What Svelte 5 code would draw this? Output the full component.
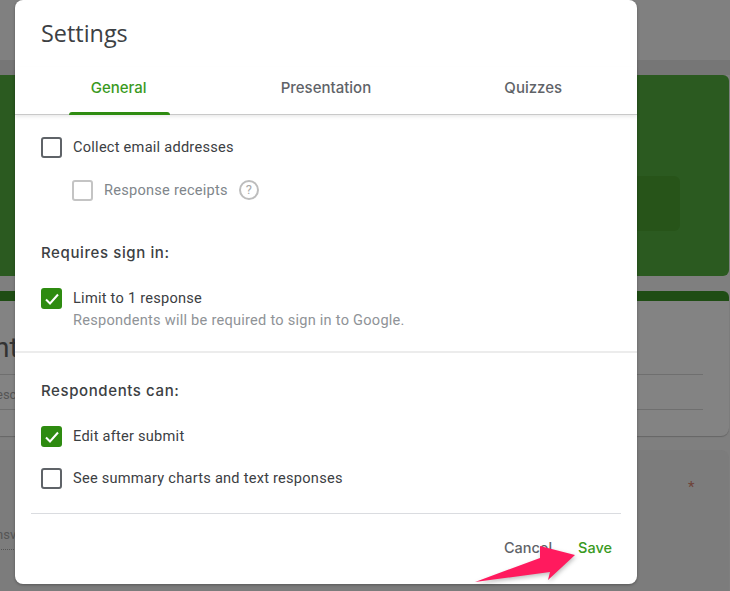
<script>
	const tabs = ['General', 'Presentation', 'Quizzes'];
</script>

<div class="page">
	<div class="backdrop">
		<div class="topbar"></div>
		<div class="banner">
			<div class="patch"></div>
		</div>
		<div class="title-card">
			<div class="strip"></div>
			<div class="title-body">
				<span class="big">nt</span>
				<div class="rule"></div>
				<span class="small">esc</span>
				<div class="rule"></div>
			</div>
		</div>
		<div class="question-card">
			<span class="star">*</span>
			<span class="small answer">nsv</span>
		</div>
	</div>

	<div class="dialog">
		<h1>Settings</h1>
		<div class="tabs">
			{#each tabs as tab, i}
				<div class="tab" class:active={i === 0}>{tab}</div>
			{/each}
		</div>

		<div class="section first">
			<div class="row">
				<span class="box"></span>
				<span class="label">Collect email addresses</span>
			</div>
			<div class="row nested">
				<span class="box disabled"></span>
				<span class="label muted">Response receipts</span>
				<span class="help">?</span>
			</div>
			<h2>Requires sign in:</h2>
			<div class="row top">
				<span class="box checked">
					<svg viewBox="0 0 22 22" width="22" height="22"><path d="M5 11.5l4 4 8-9" fill="none" stroke="#fff" stroke-width="2" /></svg>
				</span>
				<div>
					<div class="label">Limit to 1 response</div>
					<div class="hint">Respondents will be required to sign in to Google.</div>
				</div>
			</div>
		</div>

		<div class="section second">
			<h2>Respondents can:</h2>
			<div class="row">
				<span class="box checked">
					<svg viewBox="0 0 22 22" width="22" height="22"><path d="M5 11.5l4 4 8-9" fill="none" stroke="#fff" stroke-width="2" /></svg>
				</span>
				<span class="label">Edit after submit</span>
			</div>
			<div class="row">
				<span class="box"></span>
				<span class="label">See summary charts and text responses</span>
			</div>
		</div>

		<div class="footer">
			<span class="cancel">Cancel</span>
			<span class="save">Save</span>
		</div>
	</div>

	<svg class="arrow" viewBox="0 0 730 591" width="730" height="591">
		<polygon points="475,582 540,558 540,546 575,555 548,580 550,572" fill="#ff1a5e" />
	</svg>
</div>

<style>
	:global(body) {
		margin: 0;
		background: #7f7f7f;
	}

	.page {
		position: relative;
		width: 730px;
		height: 591px;
		overflow: hidden;
		font-family: Roboto, sans-serif;
	}

	.backdrop {
		display: flex;
		flex-direction: column;
		height: 100%;
		background: #7f7f7f;
	}

	.topbar {
		height: 60px;
		padding-bottom: 15px;
		background-image: linear-gradient(#808080 60px, #767676 60px);
	}

	.banner {
		position: relative;
		height: 201px;
		margin-right: 1px;
		background: #2b5a20;
		border-radius: 0 6px 6px 0;
	}

	.patch {
		position: absolute;
		left: 620px;
		top: 101px;
		width: 60px;
		height: 55px;
		background: #275419;
		border-radius: 6px;
	}

	.title-card {
		margin-top: 15px;
		margin-right: 1px;
		height: 145px;
		background: #838383;
		border-radius: 0 6px 8px 0;
		overflow: hidden;
		box-shadow: 0 1px 1px #666;
	}

	.strip {
		height: 10px;
		background: #1f4d14;
	}

	.title-body {
		display: flex;
		flex-direction: column;
		padding-top: 31px;
	}

	.big {
		font-size: 28px;
		line-height: 32px;
		color: #333;
		margin-left: -6px;
		margin-bottom: 10px;
	}

	.small {
		font-size: 13px;
		color: #555;
		line-height: 16px;
	}

	.title-body .rule {
		height: 1px;
		background: #6f6f6f;
		margin: 0 26px 0 0;
	}

	.title-body .small {
		margin-top: 12px;
		margin-bottom: 6px;
		margin-left: -4px;
	}

	.question-card {
		position: relative;
		margin-top: 14px;
		flex: 1;
		margin-right: 1px;
		background: #7c7c7c;
		border-radius: 0 8px 0 0;
	}

	.star {
		position: absolute;
		left: 688px;
		top: 28px;
		font-size: 15px;
		color: #6e4238;
	}

	.answer {
		position: absolute;
		left: 0;
		width: 24px;
		margin-left: -4px;
		top: 77px;
		padding-bottom: 6px;
		border-bottom: 1px dotted #555;
	}

	.dialog {
		position: absolute;
		left: 15px;
		top: 0;
		width: 622px;
		height: 584px;
		background: #fff;
		border-radius: 8px;
		box-shadow: 0 1px 3px rgba(0, 0, 0, 0.3);
		display: flex;
		flex-direction: column;
	}

	h1 {
		margin: 0;
		padding: 19px 26px 0;
		font-size: 23.4px;
		line-height: 28px;
		font-weight: 400;
		color: #3c4043;
		font-family: 'Open Sans', Roboto, sans-serif;
	}

	.tabs {
		display: flex;
		margin-top: 20px;
		height: 47px;
		border-bottom: 1px solid #c9c9c9;
		box-shadow: 0 2px 3px rgba(0, 0, 0, 0.08);
	}

	.tab {
		width: 207.3px;
		text-align: center;
		font-size: 15px;
		font-weight: 500;
		line-height: 42px;
		color: #5f6368;
		font-family: Inter, Roboto, sans-serif;
		position: relative;
	}

	.tab.active {
		color: #3a9a1e;
	}

	.tab.active::after {
		content: '';
		position: absolute;
		left: 54px;
		right: 52px;
		bottom: -1px;
		height: 3px;
		background: #2e8b10;
		border-radius: 3px 3px 0 0;
	}

	.section {
		padding: 0 26px;
		display: flex;
		flex-direction: column;
	}

	.first {
		padding-top: 21px;
		height: 238px;
		box-sizing: border-box;
		border-bottom: 2px solid #ececec;
	}

	.second {
		padding-top: 28px;
	}

	.row {
		display: flex;
		align-items: center;
		gap: 11px;
		min-height: 22px;
	}

	.row.top {
		align-items: flex-start;
	}

	.nested {
		margin: 21px 0 0 31px;
	}

	.box {
		flex: none;
		box-sizing: border-box;
		width: 21px;
		height: 21px;
		border: 2px solid #5f6368;
		border-radius: 3px;
	}

	.box.disabled {
		border-color: #c4c4c4;
	}

	.box.checked {
		border: none;
		background: #2e8b10;
	}

	.box svg {
		display: block;
	}

	.label {
		font-size: 14.6px;
		line-height: 20px;
		letter-spacing: 0.24px;
		color: #3c4043;
	}

	.muted {
		color: #80868b;
	}

	.hint {
		font-size: 14.6px;
		line-height: 20px;
		letter-spacing: 0.24px;
		color: #8f9397;
		margin-top: 2px;
	}

	.help {
		width: 20px;
		height: 20px;
		box-sizing: border-box;
		border: 2px solid #bdbdbd;
		border-radius: 50%;
		text-align: center;
		font-size: 13px;
		line-height: 16px;
		color: #a8a8a8;
	}

	h2 {
		margin: 0;
		font-size: 15px;
		line-height: 20px;
		font-weight: 500;
		letter-spacing: 0.6px;
		color: #3c4043;
		font-family: Inter, Roboto, sans-serif;
	}

	.first h2 {
		margin-top: 42px;
		margin-bottom: 25px;
	}

	.second h2 {
		margin-bottom: 24px;
	}

	.second .row + .row {
		margin-top: 20px;
	}

	.footer {
		margin: 24px 16px 0;
		border-top: 1px solid #dadce0;
		display: flex;
		justify-content: flex-end;
		gap: 26px;
		padding: 25px 9px 0 0;
		font-size: 14.5px;
		font-weight: 500;
		line-height: 18px;
		font-family: Inter, Roboto, sans-serif;
	}

	.cancel {
		color: #5f6368;
	}

	.save {
		color: #3a9a1e;
	}

	.arrow {
		position: absolute;
		left: 0;
		top: 0;
		filter: drop-shadow(1px 2px 2px rgba(0, 0, 0, 0.25));
		pointer-events: none;
	}
</style>
